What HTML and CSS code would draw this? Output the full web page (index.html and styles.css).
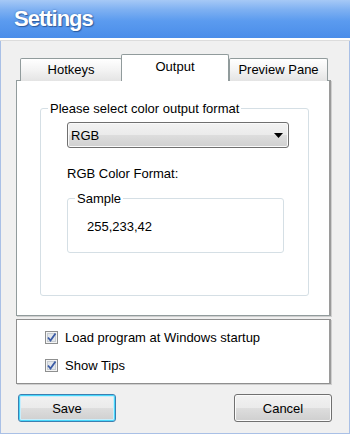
FILE: index.html
```
<!DOCTYPE html>
<html>
<head>
<meta charset="utf-8">
<link rel="stylesheet" href="styles.css">
</head>
<body>
<div class="window">
  <div class="titlebar"><span class="title">Settings</span></div>
  <div class="content">
    <div class="tabs">
      <div class="tab tab-hotkeys">Hotkeys</div>
      <div class="tab tab-active">Output</div>
      <div class="tab tab-preview">Preview Pane</div>
    </div>
    <div class="panel">
      <fieldset class="group">
        <legend>Please select color output format</legend>
        <div class="group-body">
          <div class="select">
            <span>RGB</span>
            <svg class="arrow" width="9" height="5" viewBox="0 0 9 5"><path d="M0 0H9L4.5 5Z" fill="#000"/></svg>
          </div>
          <div class="format-label">RGB Color Format:</div>
          <fieldset class="sample">
            <legend>Sample</legend>
            <div class="sample-value">255,233,42</div>
          </fieldset>
        </div>
      </fieldset>
    </div>
    <div class="checks">
      <label class="check-row">
        <svg class="cb" width="13" height="13" viewBox="0 0 13 13"><rect x="0.5" y="0.5" width="12" height="12" fill="#f4f4f4" stroke="#8e8f8f"/><rect x="2.5" y="2.5" width="8" height="8" fill="#e2e6ea" stroke="#c6ccd2"/><path d="M3 6.5L5.5 9.5L10.5 2.5" fill="none" stroke="#3b5ba5" stroke-width="1.8"/></svg>
        <span>Load program at Windows startup</span>
      </label>
      <label class="check-row">
        <svg class="cb" width="13" height="13" viewBox="0 0 13 13"><rect x="0.5" y="0.5" width="12" height="12" fill="#f4f4f4" stroke="#8e8f8f"/><rect x="2.5" y="2.5" width="8" height="8" fill="#e2e6ea" stroke="#c6ccd2"/><path d="M3 6.5L5.5 9.5L10.5 2.5" fill="none" stroke="#3b5ba5" stroke-width="1.8"/></svg>
        <span>Show Tips</span>
      </label>
    </div>
    <div class="buttons">
      <button class="btn btn-default">Save</button>
      <button class="btn">Cancel</button>
    </div>
  </div>
</div>
</body>
</html>
```
FILE: styles.css
```
* { box-sizing: border-box; }
html, body { margin: 0; padding: 0; }
body {
  width: 350px;
  height: 434px;
  overflow: hidden;
  font-family: "Liberation Sans", Arial, sans-serif;
  font-size: 13px;
  color: #000;
}
.window {
  position: relative;
  width: 350px;
  height: 434px;
  background: #f0f0f0;
  border-left: 1px solid #a9c0e6;
  border-right: 1px solid #a9c0e6;
  border-bottom: 1px solid #a9c0e6;
}
.titlebar {
  height: 40px;
  margin: 0 -1px;
  background: linear-gradient(#a6c9f6 0%, #7fb1f2 25%, #5b9bef 55%, #4a8de9 100%);
  border-bottom: 2px solid #fff;
  box-shadow: 0 1px 0 #dcdcdc;
  padding-left: 14px;
  display: flex;
  align-items: center;
}
.title {
  font-weight: bold;
  font-size: 22px;
  letter-spacing: -1px;
  color: #fff;
  text-shadow: 1px 1px 1px #2d5b9e, 0 0 2px #3a6cb5;
  margin-top: -1px;
}
.content {
  padding: 14px 0 0 15px;
}
.tabs {
  display: flex;
  align-items: flex-end;
  height: 27px;
  margin-left: 4px;
  position: relative;
  z-index: 2;
}
.tab {
  height: 23px;
  border: 1px solid #919b9c;
  border-bottom: none;
  border-radius: 2px 2px 0 0;
  background: linear-gradient(#ffffff, #f3f3f3 50%, #e4e4e4);
  display: flex;
  align-items: center;
  justify-content: center;
  padding-bottom: 1px;
}
.tab-hotkeys { width: 102px; margin-right: -1px; }
.tab-preview { width: 99px; margin-left: 0; }
.tab-active {
  width: 108px;
  height: 27px;
  background: #fff;
  padding-bottom: 4px;
  position: relative;
  z-index: 3;
}
.panel {
  width: 315px;
  height: 236px;
  margin-top: -1px;
  background: #fff;
  border: 1px solid #919b9c;
  border-right: 2px solid #9a9a9a;
  box-shadow: 1px 1px 0 #cfcfcf;
  padding: 20px 20px 0 23px;
  position: relative;
  z-index: 1;
}
fieldset {
  margin: 0;
  padding: 0;
  min-width: 0;
}
legend {
  padding: 0 2px;
  line-height: 15px;
}
.group {
  height: 195px;
  border: 1px solid #d5dfe5;
  border-radius: 3px;
}
.group > legend { margin-left: 7px; }
.group-body {
  padding: 6px 19px 0 26px;
}
.select {
  height: 26px;
  border: 1px solid #707070;
  border-radius: 3px;
  background: linear-gradient(#f3f3f3 0%, #ebebeb 48%, #dddddd 52%, #d0d0d0 100%);
  box-shadow: inset 0 0 0 1px #fafafa;
  display: flex;
  align-items: center;
  justify-content: space-between;
  padding: 0 5px 0 3px;
}
.arrow { margin-top: 1px; }
.format-label {
  margin-top: 18px;
  line-height: 15px;
}
.sample {
  margin-top: 10px;
  width: 217px;
  height: 62px;
  border: 1px solid #d5dfe5;
  border-radius: 3px;
}
.sample > legend { margin-left: 7px; }
.sample-value {
  margin-top: 13px;
  padding-left: 19px;
  line-height: 15px;
}
.checks {
  margin-top: 3px;
  width: 315px;
  height: 65px;
  background: #fff;
  border: 1px solid #8f8f8f;
  border-right: 2px solid #9a9a9a;
  box-shadow: 1px 1px 0 #cfcfcf;
  padding: 10px 0 0 28px;
  display: flex;
  flex-direction: column;
  gap: 13px;
}
.check-row {
  display: flex;
  align-items: center;
  height: 15px;
}
.cb { margin-right: 7px; flex: none; }
.buttons {
  display: flex;
  justify-content: space-between;
  margin-top: 10px;
  margin-left: 2px;
  width: 314px;
}
.btn {
  width: 98px;
  height: 28px;
  font-family: "Liberation Sans", Arial, sans-serif;
  font-size: 13px;
  color: #000;
  border: 1px solid #707070;
  border-radius: 3px;
  background: linear-gradient(#f2f2f2 0%, #ebebeb 48%, #dddddd 52%, #cfcfcf 100%);
  box-shadow: inset 0 0 0 1px #fbfbfb;
  padding: 0;
}
.btn-default {
  border-color: #3c7fb1;
  box-shadow: inset 0 0 0 1px #48d8fb, inset 0 0 0 2px #c8eefc;
}
```
